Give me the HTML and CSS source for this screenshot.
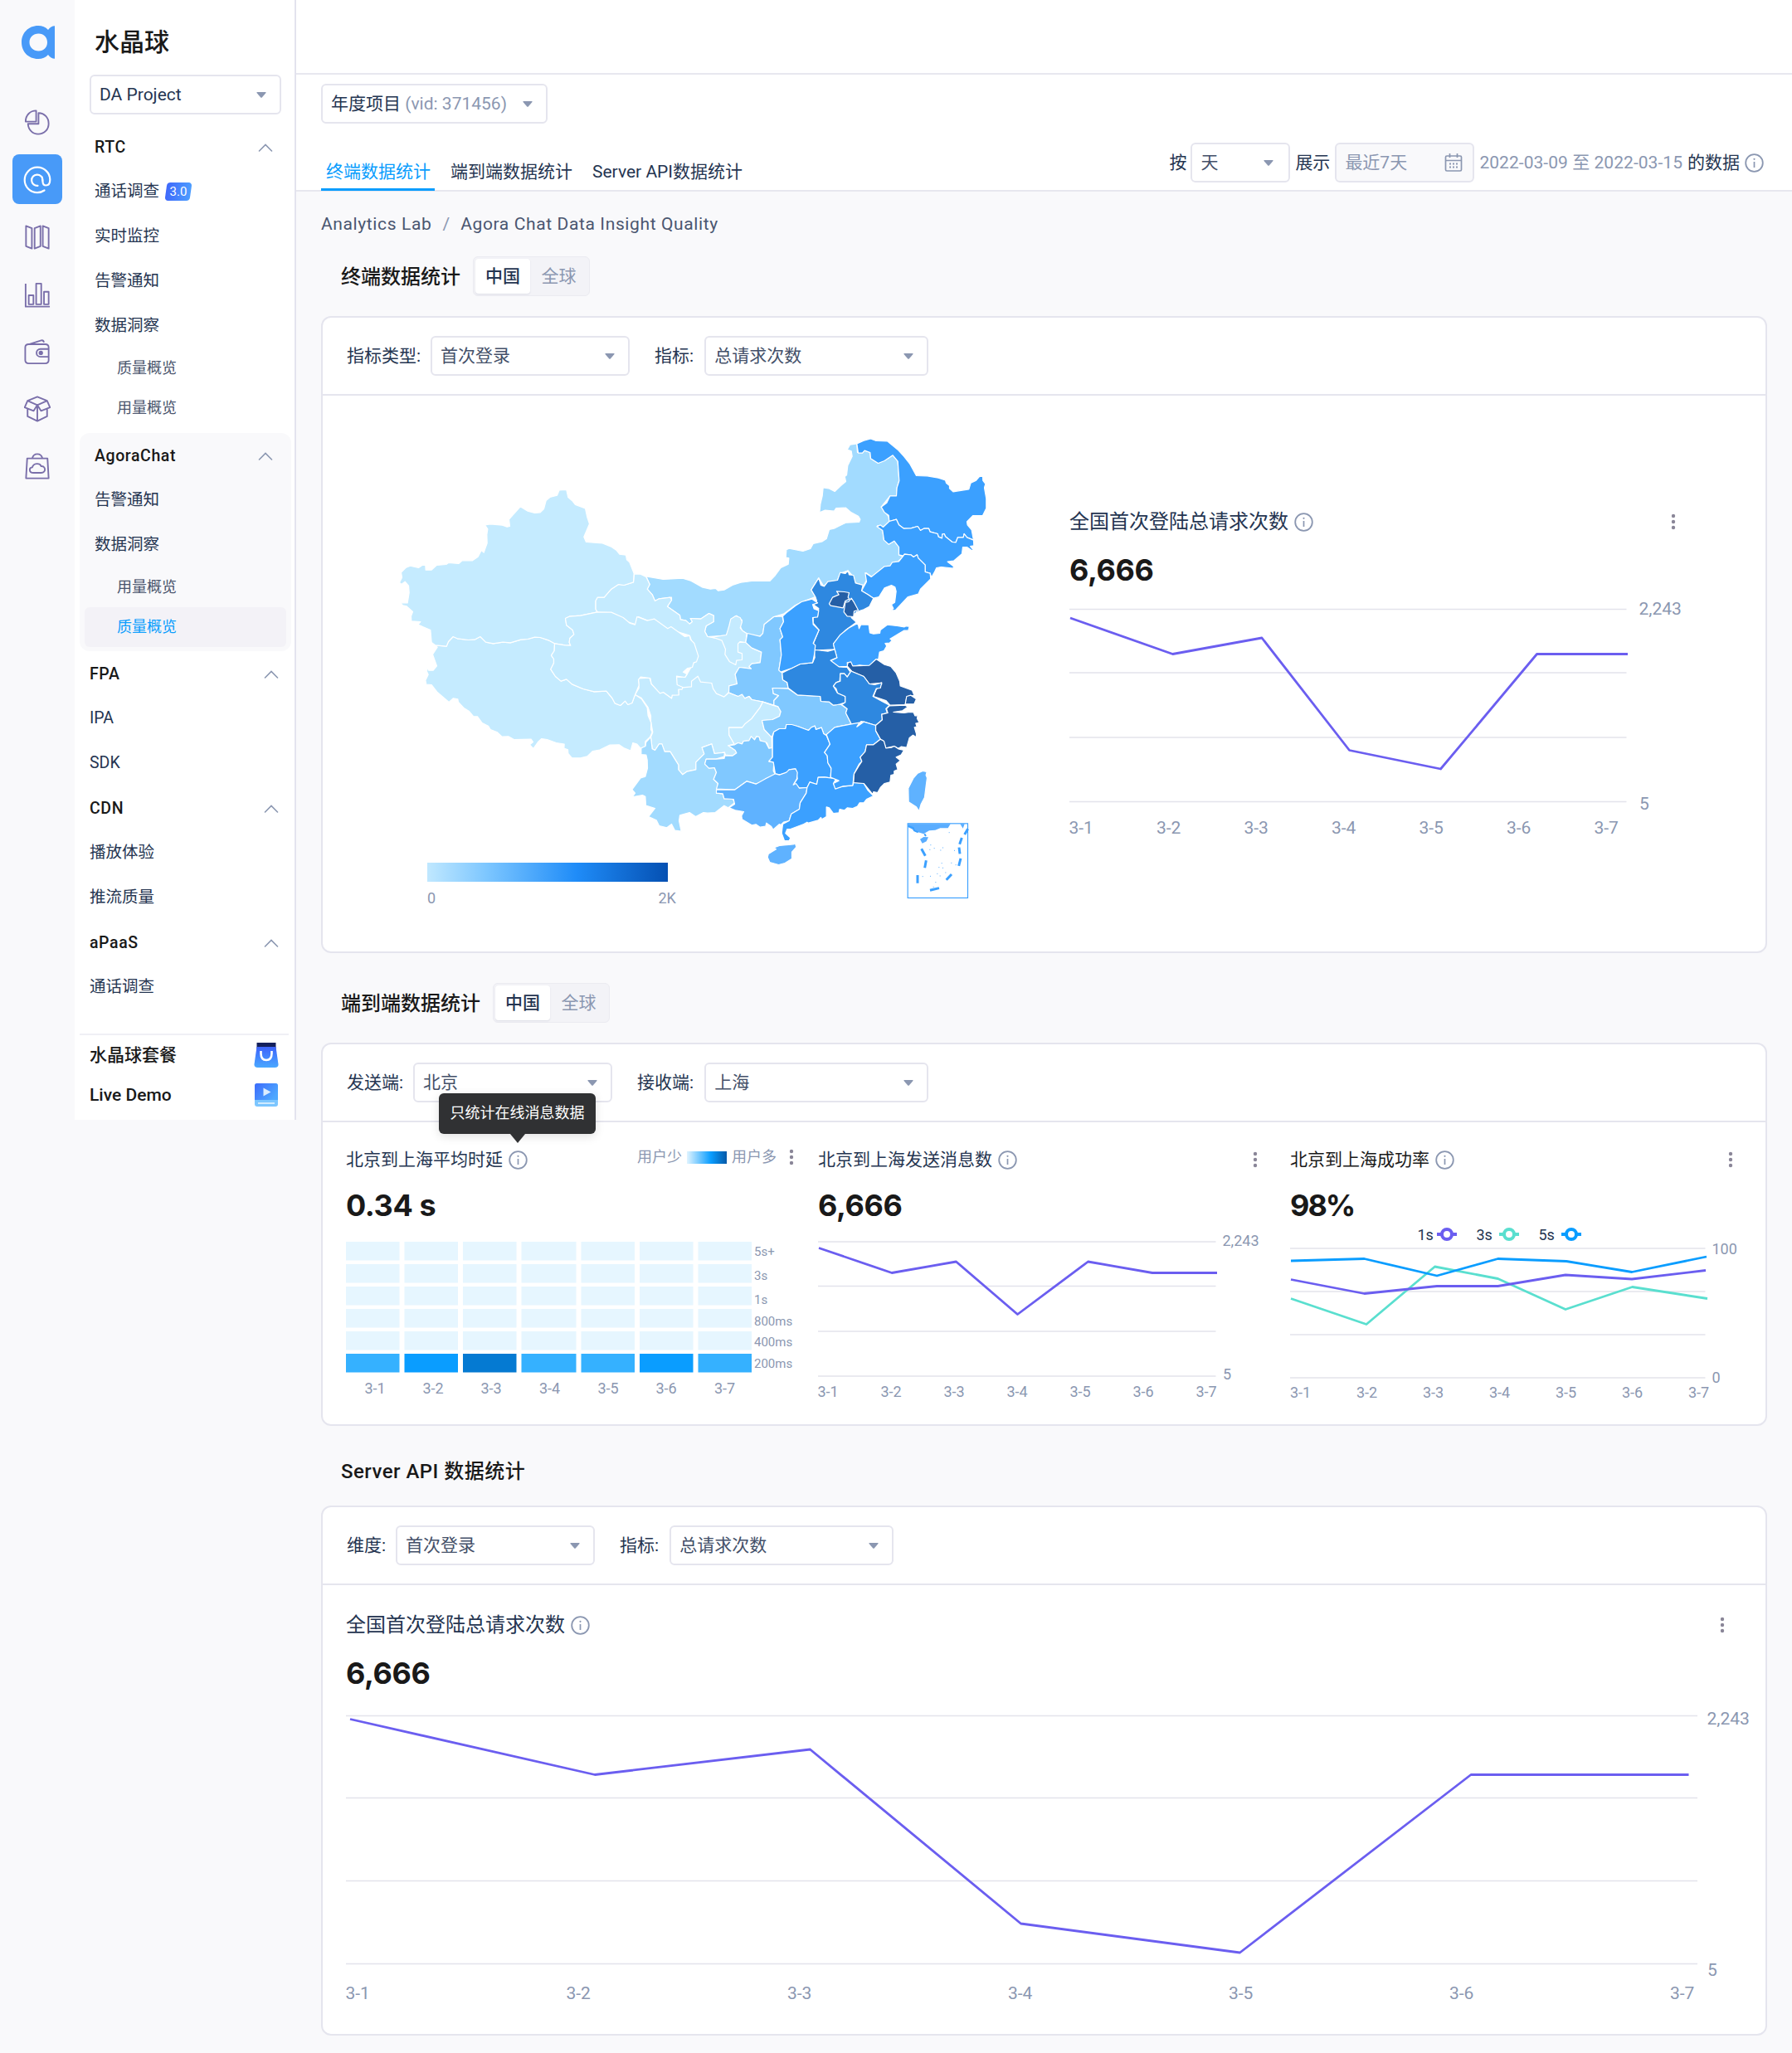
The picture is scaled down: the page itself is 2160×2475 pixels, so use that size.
FILE: index.html
```html
<!DOCTYPE html>
<html lang="zh-CN">
<head>
<meta charset="utf-8">
<title>水晶球</title>
<link rel="stylesheet" href="styles.css">
</head>
<body>
<svg class="defs" aria-hidden="true">
  <symbol id="caret" viewBox="0 0 12 7"><path d="M1 0h10q1 0 .5 1L7 6.200q-1 1-2 0L.5 1Q0 0 1 0Z"/></symbol>
  <symbol id="chevron" viewBox="0 0 18 10"><path d="M1.500 9 9 1.500 16.500 9" fill="none" stroke="currentColor" stroke-width="1.600" stroke-linecap="round"/></symbol>
  <symbol id="info" viewBox="0 0 23 23"><circle cx="11.500" cy="11.500" r="10.300" fill="none" stroke="currentColor" stroke-width="1.800"/><path d="M11.500 10v7" stroke="currentColor" stroke-width="1.700"/><circle cx="11.500" cy="6.800" r="1.100"/></symbol>
  <symbol id="dots" viewBox="0 0 6 20"><circle cx="3" cy="3" r="2.200"/><circle cx="3" cy="10" r="2.200"/><circle cx="3" cy="17" r="2.200"/></symbol>
</svg>
<div class="app">
  <nav class="rail">
    <svg class="logo" viewBox="0 0 40 40"><path fill-rule="evenodd" d="M20 0C8 0 0 9 0 20s8 20 20 20c5 0 9-1.500 12-5 2 3 5 4.800 8 4.800V.2c-3 0-6 1.800-8 4.800-3-3.500-7-5-12-5Zm.5 9.500c6.200 0 10.500 4.600 10.500 10.500s-4.300 10.500-10.500 10.500S9.500 26 9.500 20 14 9.500 20.500 9.500Z"/></svg>
    <a class="rail-item"><svg viewBox="0 0 34 34"><path d="M15.500 1.500C8 1.500 2 7 2 15.500h13.500ZM18.500 4.500v13.800H5C5.500 26 11 31.500 18 31.500c8 0 13.500-6 13.500-13.500S26 4.500 18.500 4.500Z"/></svg></a>
    <a class="rail-item on"><svg viewBox="0 0 34 34"><path d="M25.500 29.500A15 15 0 0 1 17 32.200C8.500 32.200 1.700 25.500 1.700 17S8.500 1.700 17 1.700 32.300 8.500 32.300 16.500c0 4.500-2 7-4.800 7-2.500 0-4-1.500-4-4.500v-2a6.700 6.700 0 1 0-6 6.900M23.300 18.500c-.3-4-.3-4.500-.6-5"/></svg></a>
    <a class="rail-item"><svg viewBox="0 0 34 34"><path d="M2.500 2.500 10 5.500v26l-7.500-3ZM13.500 5.500l7.500-3v26l-7.500 3ZM24 2.500l7.500 3v26l-7.500-3Z"/></svg></a>
    <a class="rail-item"><svg viewBox="0 0 34 34"><path d="M2 2v29.500h31M6 17h6v11.500H6ZM15.500 2H22v26.500h-6.500ZM25.500 12.500h6v16h-6Z"/></svg></a>
    <a class="rail-item"><svg viewBox="0 0 34 34"><path d="M6 7.500h21c3 0 4.500 1.500 4.500 4v16.500c0 2.500-1.500 4-4.500 4H6c-3 0-4.500-1.500-4.500-4V11.500c0-2.500 1.500-4 4.500-4ZM7 7.200 22 2.500c2.500-.6 3 .5 3.500 2.500M31.500 13.500H21c-3 0-5 2.500-5 5s2 5 5 5h10.500"/><circle cx="21.500" cy="18.500" r="1.800"/></svg></a>
    <a class="rail-item"><svg viewBox="0 0 34 34"><path d="M17 1.500 4.500 6.500 17 12l12.500-5.500ZM4.500 6.500.8 15l11.500 4.500L17 12l4.700 7.500L33.200 15l-3.700-8.500M4.500 17v9.500L17 32.500l12.500-6V17M17 12v20.500"/></svg></a>
    <a class="rail-item"><svg viewBox="0 0 34 34"><path d="M4 7h26l1.500 25.500H2.500ZM10.500 7c1-4 3.500-5.500 6.500-5.500s5.500 1.500 6.500 5.500M12 25.500c-6 0-6-6.500-1.500-7 1.500-5.500 9.500-6 11.500-1.500 6-.5 6.500 8.500 0 8.500Z"/></svg></a>
  </nav>

  <aside class="side">
    <h1>水晶球</h1>
    <div class="select project">DA Project<svg class="caret"><use href="#caret"/></svg></div>
    <div class="group in">
      <div class="row head">RTC<svg class="chev"><use href="#chevron"/></svg></div>
      <div class="row">通话调查<span class="badge"><i>3.0</i></span></div>
      <div class="row">实时监控</div>
      <div class="row">告警通知</div>
      <div class="row">数据洞察</div>
      <div class="row sub">质量概览</div>
      <div class="row sub">用量概览</div>
    </div>
    <div class="group in shaded">
      <div class="row head">AgoraChat<svg class="chev"><use href="#chevron"/></svg></div>
      <div class="row">告警通知</div>
      <div class="row">数据洞察</div>
      <div class="row sub">用量概览</div>
      <div class="row sub current">质量概览</div>
    </div>
    <div class="group">
      <div class="row head">FPA<svg class="chev"><use href="#chevron"/></svg></div>
      <div class="row">IPA</div>
      <div class="row">SDK</div>
      <div class="row head">CDN<svg class="chev"><use href="#chevron"/></svg></div>
      <div class="row">播放体验</div>
      <div class="row">推流质量</div>
      <div class="row head">aPaaS<svg class="chev"><use href="#chevron"/></svg></div>
      <div class="row">通话调查</div>
    </div>
    <div class="foot">
      <div class="row">水晶球套餐<svg width="30" height="30" viewBox="0 0 30 30"><defs><linearGradient id="gb" x2="0" y2="1"><stop stop-color="#3d63fb"/><stop offset="1" stop-color="#4aa8ff"/></linearGradient></defs><path d="M3.500 0h23v8h-23Z" fill="#14205c"/><path d="M3.500 5h23l3 21q.3 4-4 4h-21q-4.300 0-4-4Z" fill="url(#gb)"/><path d="M8.500 10v3q0 8 6.500 8t6.500-8v-3" fill="none" stroke="#fff" stroke-width="2.600"/></svg></div>
      <div class="row">Live Demo<svg width="30" height="28" viewBox="0 0 30 28"><defs><linearGradient id="gv" x2="1" y2=".6"><stop stop-color="#3d6bfb"/><stop offset="1" stop-color="#4ea8ff"/></linearGradient></defs><rect x="1" width="28" height="28" rx="3" fill="#7cc6ff"/><path d="M4 0h22q3 0 3 3v17H1V3q0-3 3-3Z" fill="url(#gv)"/><path d="m11.500 5.500 9 5-9 5Z" fill="#dcecff"/><path d="M5 24h20" stroke="#d8efff" stroke-width="1.800"/></svg></div>
    </div>
  </aside>

  <main>
    <div class="topbar"></div>
    <header class="subbar">
      <div class="left">
        <div class="select vid">年度项目&nbsp;<span>(vid: 371456)</span><svg class="caret"><use href="#caret"/></svg></div>
        <div class="tabs"><a class="on">终端数据统计</a><a>端到端数据统计</a><a>Server API数据统计</a></div>
      </div>
      <div class="range">
        <span>按</span>
        <div class="select day">天<svg class="caret"><use href="#caret"/></svg></div>
        <span>展示</span>
        <div class="select picker">最近7天<svg width="22" height="22" viewBox="0 0 22 22"><g fill="none" stroke="currentColor" stroke-width="1.700"><rect x="1.500" y="3" width="19" height="18" rx="1.500"/><path d="M1.500 8.500h19M6.500 0v5M15.500 0v5"/></g><path d="M6 11.500h2v2H6Zm4 0h2v2h-2Zm4 0h2v2h-2Zm-8 4h2v2H6Zm4 0h2v2h-2Zm4 0h2v2h-2Z"/></svg></div>
        <span class="dates">2022-03-09 至 2022-03-15</span>
        <span>的数据</span>
        <svg class="info"><use href="#info"/></svg>
      </div>
    </header>

    <div class="content">
      <div class="crumbs">Analytics Lab<i>/</i>Agora Chat Data Insight Quality</div>

      <div class="section-head"><h2>终端数据统计</h2><div class="toggle"><b>中国</b><span>全球</span></div></div>
      <section class="card terminal">
        <div class="filters">
          <label>指标类型:</label><div class="select w240">首次登录<svg class="caret"><use href="#caret"/></svg></div>
          <label>指标:</label><div class="select w270">总请求次数<svg class="caret"><use href="#caret"/></svg></div>
        </div>
        <div class="body">
          <svg class="map" width="850" height="670" viewBox="389 477 850 670">
            <defs><linearGradient id="scale"><stop stop-color="#c0e8ff"/><stop offset=".25" stop-color="#7cc6ff"/><stop offset=".62" stop-color="#1f8cf8"/><stop offset="1" stop-color="#0550b2"/></linearGradient></defs>
            <g transform="translate(859.500 509.500) scale(.33333)" class="prov">
              <path class="c2" d="M-242,556 -180,567 -110,563 -80,572 -40,595 -10,602 10,600 18,608 40,605 70,588 100,578 140,573 205,573 225,552 245,525 272,512 274,490 263,488 265,460 275,455 325,465 352,456 362,438 395,430 410,420 420,387 440,382 480,362 528,360 532,350 525,338 500,325 480,308 445,309 438,320 405,317 385,325 388,295 395,265 398,235 418,238 440,249 462,228 480,213 476,195 483,190 487,155 503,122 500,103 485,98 495,80 520,76 522,108 540,110 548,101 568,108 570,130 597,147 632,130 650,118 668,140 673,210 665,235 663,265 640,265 608,305 635,340 637,360 615,378 595,372 613,390 618,425 635,440 655,428 672,450 672,478 688,485 665,505 640,520 575,558 553,543 555,570 545,588 515,580 505,555 488,535 460,545 450,570 415,578 400,592 382,562 355,605 370,630 330,645 295,662 255,692 220,702 185,730 180,765 165,775 125,765 105,752 98,735 105,715 85,698 65,712 58,745 48,770 -20,774 -30,755 -25,735 2,720 2,698 -15,690 -45,710 -82,708 -75,720 -85,728 -98,716 -118,712 -120,697 -165,665 -150,642 -150,632 -195,637 -210,645 -220,622 -238,602 -229,585Z"/>
              <path class="c4" d="M520,76 545,65 570,58 590,66 630,67 670,100 690,122 712,150 735,192 775,193 815,200 840,208 843,218 855,228 855,238 868,250 925,241 932,218 950,210 963,195 975,194 976,210 985,222 981,235 988,275 988,310 975,336 940,336 918,358 920,370 935,388 942,425 918,415 908,402 905,415 885,415 878,433 865,432 840,412 836,402 829,404 828,418 815,413 812,402 785,395 780,383 762,383 750,390 740,375 715,382 690,383 672,370 663,350 637,357 635,335 620,325 608,305 628,290 640,265 663,265 665,235 673,210 668,140 650,118 632,130 620,138 597,147 570,130 568,108 548,101 540,110 525,110Z"/>
              <path class="c4" d="M637,357 663,350 672,370 690,383 715,382 740,375 750,390 762,383 780,383 785,395 812,402 815,413 828,418 829,404 836,402 840,412 865,432 878,433 885,415 905,415 908,402 918,415 942,425 943,445 930,447 942,462 935,462 918,450 903,450 900,475 870,500 848,503 870,520 868,527 825,522 808,525 800,542 790,560 785,545 767,540 767,515 742,490 738,478 725,486 715,478 692,476 688,482 672,478 672,450 655,428 635,440 618,425 613,390 592,376 605,370 615,378Z"/>
              <path class="c4" d="M688,482 692,476 715,478 725,486 738,478 742,490 767,515 767,540 785,545 787,565 750,602 742,620 705,630 660,678 643,680 652,672 645,658 657,650 662,610 658,595 645,588 620,598 600,630 580,635 560,622 537,608 555,575 550,543 572,558 620,520 640,518 648,505 672,502Z"/>
              <path class="c5" d="M382,562 390,588 402,592 415,575 450,570 460,542 478,546 488,535 492,550 508,552 515,580 542,588 537,608 560,622 580,635 565,665 545,676 520,684 500,705 518,722 480,750 435,800 440,820 385,823 368,830 362,800 383,750 362,725 362,705 378,700 382,672 362,658 375,645 370,630 355,605Z"/>
              <path class="c6" d="M432,632 455,622 447,610 475,612 492,615 488,632 493,638 478,645 470,670 425,662 420,655Z"/>
              <path class="c6" d="M478,650 490,648 500,635 510,650 525,678 510,682 508,702 485,700 473,685Z"/>
              <path class="c4" d="M435,800 460,767 490,743 518,728 525,730 528,745 535,730 563,731 567,760 580,764 603,762 605,750 630,731 665,735 692,739 698,736 710,737 706,752 690,752 640,782 647,788 638,797 622,798 628,808 618,825 602,830 598,855 585,860 565,882 530,877 499,882 495,867 485,868 487,882 450,882 425,862 448,850 440,822Z"/>
            </g>
            <g transform="translate(739.500 639.500) scale(.33333)" class="prov">
              <path class="c1" d="M75,157 98,158 118,168 131,195 122,212 140,232 150,255 165,247 205,242 210,252 195,275 240,307 242,322 262,326 275,338 285,330 278,318 315,320 345,300 362,308 362,330 335,345 330,365 340,384 448,405 480,405 500,425 535,440 530,478 500,482 498,500 455,495 440,520 447,555 418,562 417,585 400,602 245,590 228,565 228,530 260,530 290,478 305,455 275,380 195,355 90,312 80,340 -58,295 -65,285 -65,255 -58,242 -34,242 -8,212 18,195 38,198 72,187Z"/>
              <path class="c1" d="M355,386 408,378 413,362 418,345 424,320 442,309 458,315 465,330 458,352 467,363 482,373 478,405 458,402 450,410 450,440 465,445 465,468 445,470 442,486 420,475 403,448 405,430 392,398 370,390Z"/>
              <path class="c3" d="M484,372 530,383 540,372 545,340 580,312 610,310 615,330 602,355 612,385 602,395 607,450 598,505 610,515 612,540 628,550 632,572 575,570 578,590 597,597 580,615 580,632 540,620 500,612 490,600 475,607 450,600 417,587 418,562 447,555 440,520 455,495 498,500 490,492 500,482 530,478 535,440 500,425 478,405Z"/>
              <path class="c1" d="M90,535 130,533 137,555 168,587 180,585 210,607 212,594 235,594 235,572 250,568 282,565 282,545 305,527 315,548 355,552 360,572 372,590 400,602 417,587 450,600 465,593 475,607 490,600 500,612 540,620 530,640 500,680 465,713 417,713 418,740 438,772 415,778 440,795 445,805 430,815 405,812 402,803 365,807 355,772 320,785 328,808 298,838 298,865 265,872 250,883 235,865 235,848 205,800 185,800 175,772 165,772 150,795 140,790 135,747 142,730 135,690 135,670 125,640 100,605 78,594 92,570Z"/>
              <path class="c1" d="M540,620 575,632 595,637 605,655 600,672 575,684 537,687 545,720 572,748 573,785 562,788 555,768 530,760 527,747 517,745 510,757 498,745 490,760 470,762 465,772 450,768 438,775 418,740 417,713 465,713 475,700 500,680 530,640Z"/>
              <path class="c2" d="M135,747 140,790 150,795 165,772 175,772 185,800 205,800 235,848 235,865 250,883 265,872 298,865 298,838 328,808 320,785 355,772 365,807 402,803 400,818 370,827 335,827 330,845 345,860 365,858 372,875 362,900 378,915 372,950 395,952 400,970 430,968 438,985 415,1003 400,995 368,1020 340,1022 325,1020 297,1035 275,1020 240,1030 237,1050 245,1088 222,1085 210,1062 193,1075 165,1068 155,1048 127,1035 150,1005 117,995 115,962 105,957 68,964 78,950 67,937 98,895 115,890 123,860 122,830 118,812 100,810 100,785 115,780 118,765Z"/>
              <path class="c3" d="M335,827 370,827 400,825 403,814 430,815 445,805 440,795 415,778 438,775 450,768 465,772 470,762 490,760 498,745 510,757 517,745 527,747 530,760 550,765 562,788 575,786 575,820 562,836 580,838 578,870 585,883 550,898 540,908 515,917 482,907 438,938 372,935 378,915 362,900 372,875 365,858 345,860 330,845Z"/>
              <path class="c3" d="M575,570 632,572 665,595 748,600 750,618 780,620 795,632 820,628 845,645 840,660 860,700 800,712 770,740 760,735 752,713 732,720 728,707 705,723 665,708 625,702 622,717 600,717 580,728 572,748 545,720 537,687 575,684 600,672 605,655 595,637 580,632 580,615 597,597 578,590Z"/>
              <path class="c4" d="M575,748 580,728 600,717 622,717 625,702 645,702 665,708 705,723 715,712 728,707 732,720 752,713 760,735 770,742 783,773 763,803 773,815 775,840 787,860 785,895 762,892 740,893 735,918 710,910 700,930 672,932 650,920 665,898 658,862 635,865 635,877 600,883 585,880 578,838 562,834 575,820Z"/>
              <path class="c25" d="M372,937 438,938 482,907 515,917 550,898 585,880 600,884 625,875 635,865 658,862 665,875 663,898 650,920 660,915 672,932 700,930 697,950 675,985 672,1008 643,1025 635,1050 615,1055 605,1065 600,1062 577,1082 570,1070 553,1058 550,1070 530,1073 515,1063 500,1066 465,1045 463,1032 471,1017 440,1012 418,1003 438,990 434,972 400,970 395,952 372,950Z"/>
              <path class="c4" d="M700,930 710,910 735,918 740,893 762,892 785,895 805,898 795,915 802,930 835,925 865,922 868,912 905,915 920,940 940,960 915,972 905,985 890,985 882,998 865,1005 845,1003 835,1012 818,1008 815,1021 795,1023 780,1003 770,1000 770,1035 753,1045 750,1038 740,1048 705,1058 700,1055 688,1062 640,1080 628,1080 622,1095 640,1112 635,1122 618,1122 608,1095 612,1062 635,1050 643,1025 672,1008 675,985 697,950Z"/>
              <path class="c25" d="M580,1147 600,1140 650,1135 657,1132 661,1145 645,1163 645,1187 620,1203 597,1209 565,1200 557,1182 560,1170 588,1153Z"/>
              <path class="c5" d="M610,515 640,500 675,483 720,478 728,460 726,432 745,433 775,437 800,430 808,460 785,470 815,493 845,495 857,512 845,530 835,518 820,518 818,545 805,550 795,563 810,588 838,600 838,622 820,628 810,630 795,632 780,620 750,618 748,600 665,595 632,570 628,550 612,540Z"/>
              <path class="c4" d="M625,298 658,272 680,258 718,248 738,262 720,268 725,283 742,290 738,313 720,315 722,340 743,360 722,408 730,415 726,450 720,478 675,483 640,500 605,512 598,505 607,450 602,395 612,385 602,355 615,330 612,310Z"/>
              <path class="c6" d="M845,490 848,478 858,475 865,490 925,488 950,465 980,485 1003,492 1022,515 1035,545 1037,562 1080,578 1088,598 1072,597 1060,604 1055,630 1000,632 985,615 940,600 950,575 970,555 960,552 925,555 905,528 862,510Z"/>
              <path class="c6" d="M1060,600 1075,596 1095,610 1087,628 1055,628Z"/>
              <path class="c5" d="M845,495 862,510 905,528 925,555 945,558 970,550 965,570 950,572 938,600 975,620 998,632 985,645 990,660 970,665 972,685 948,705 905,692 895,690 880,710 860,700 840,660 845,645 825,630 838,622 838,600 810,588 805,572 795,563 805,550 820,545 820,518 835,518 845,530 857,512Z"/>
              <path class="c6" d="M998,634 1055,632 1064,638 1045,652 1012,657 1050,660 1072,657 1085,658 1090,670 1100,670 1098,680 1106,695 1093,698 1097,710 1088,712 1095,735 1095,748 1083,740 1070,750 1060,785 1040,782 1030,788 1015,780 985,787 975,760 965,755 948,725 948,705 972,685 970,665 992,660 987,645Z"/>
              <path class="c4" d="M770,738 800,712 860,700 890,695 880,710 905,692 948,705 948,725 965,755 940,775 915,775 910,800 892,820 898,835 888,845 870,880 865,922 830,925 802,935 795,915 815,905 785,893 787,860 775,840 773,815 763,803 783,773Z"/>
              <path class="c6" d="M965,755 978,762 985,787 1005,785 1015,780 1030,790 1050,795 1040,812 1022,820 1037,832 1022,845 1028,865 1015,870 1015,882 1003,885 1000,910 980,915 965,930 955,948 940,945 938,955 905,915 868,912 870,880 888,850 898,835 892,820 910,800 915,775 940,775Z"/>
              <path class="c25" d="M1118,870 1133,873 1130,885 1134,895 1130,925 1125,965 1112,990 1105,1015 1095,1000 1067,982 1066,932 1085,895 1100,878Z"/>
            </g>
            <g transform="translate(469.500 509.500) scale(.33333)" class="prov">
              <path class="c1" d="M165,805 206,809 213,792 230,774 245,781 285,786 310,784 328,774 348,794 375,799 410,794 437,796 475,785 500,783 525,776 545,777 575,787 597,799 596,825 585,842 594,855 594,870 583,892 600,918 620,935 640,928 660,946 700,963 740,973 784,971 805,996 815,1015 835,1023 852,1007 862,1020 877,1014 888,984 912,1000 932,1031 935,1060 946,1085 945,1110 950,1120 942,1137 925,1153 925,1170 908,1178 895,1163 880,1158 872,1187 850,1178 830,1165 797,1166 760,1184 735,1188 715,1207 690,1213 660,1213 646,1197 645,1183 631,1178 632,1163 603,1158 570,1146 550,1143 537,1155 520,1179 507,1165 519,1155 512,1145 450,1146 430,1135 407,1136 390,1120 365,1110 357,1097 335,1086 318,1063 304,1063 287,1043 270,1033 249,1011 247,1000 230,997 215,1011 172,974 152,948 133,947 130,932 140,911 135,900 136,885 142,896 158,896 171,880 156,838 173,812Z"/>
              <path class="c1" d="M36,578 45,560 42,542 60,524 75,518 105,525 118,516 130,516 131,533 152,533 170,516 205,513 213,507 250,510 263,499 300,499 320,485 332,462 341,470 353,436 352,405 355,385 345,370 365,367 408,371 425,377 435,375 432,350 473,304 500,320 525,327 545,325 558,312 566,282 580,270 606,263 614,244 640,243 646,270 660,282 672,297 708,310 715,342 723,366 703,413 711,432 770,436 800,448 820,461 832,476 855,479 858,496 868,505 884,545 882,577 848,588 828,585 802,602 776,632 752,632 745,645 745,675 752,685 691,698 650,701 636,708 640,733 662,750 667,766 652,780 650,795 655,806 635,805 597,799 575,787 545,777 525,776 500,783 475,785 437,796 410,794 375,799 348,794 328,774 310,784 285,786 245,781 230,774 213,792 206,809 165,805 152,795 148,750 103,731 112,720 79,718 78,700 84,684 62,664 48,661 40,652 65,652 71,615 69,590 56,575 43,585Z"/>
              <path class="c1" d="M752,685 802,686 845,705 870,726 888,731 895,702 932,716 958,710 1006,745 1018,738 1068,774 1086,771 1088,784 1102,798 1117,845 1110,865 1100,868 1095,885 1078,888 1062,902 1076,910 1068,921 1038,917 1040,948 1060,957 1058,965 1045,965 1046,985 1022,986 1020,997 990,975 978,979 947,945 943,924 908,920 900,930 902,950 888,984 877,1014 862,1020 852,1007 835,1023 815,1015 805,996 784,971 740,973 700,963 660,946 640,928 620,935 600,918 583,892 594,870 594,855 585,842 596,825 597,799 635,805 655,806 650,795 652,780 667,766 662,750 640,733 636,708 650,701 691,698Z"/>
            </g>
            <g transform="translate(920 780) scale(.33333)">
              <path d="M523,640H677L668,655 640,655 622,662 600,664 580,676 555,668 523,650Z M712,640H728L722,656Z M567,695 580,687 597,688 590,703 575,710Z" fill="#5aadff"/>
              <path d="M524,648 542,654 546,664 560,670M583,676 588,684" fill="none" stroke="#3ba0ff" stroke-width="6"/>
              <path d="M740,658 728,678M718,690 710,713M708,725 711,748M714,765 707,792M681,822 662,842M636,872 603,880M558,825 558,854M589,772 584,799M572,730 586,755" fill="none" stroke="#3ba0ff" stroke-width="9"/>
              <path d="M604,716h3M601,733h3M617,728h3M640,735h3M648,726h3M690,736h3M671,671h3M644,782h3M634,797h3M648,799h3M679,781h3M695,788h3M575,830h3M603,829h3M628,820h3M638,828h3M658,816h3M622,851h3M614,868h3" stroke="#5aadff" stroke-width="3"/>
              <rect x="522.500" y="638.500" width="217" height="269" fill="none" stroke="#3ba0ff" stroke-width="3.500"/>
            </g>
            <rect x="515" y="1040" width="290" height="23" fill="url(#scale)"/>
            <text x="515" y="1089" class="t18">0</text><text x="793.500" y="1089" class="t18">2K</text>
          </svg>
          <div class="panel country">
            <div class="panel-head large"><span>全国首次登陆总请求次数</span><svg class="info"><use href="#info"/></svg><svg class="dots"><use href="#dots"/></svg></div>
            <div class="metric">6,666</div>
            <svg class="chart" width="760" height="300" viewBox="1289 714 760 300">
              <path class="grid" d="M1289 734.500H1960.500M1289 811H1960.500M1289 889H1960.500M1289 966.500H1960.500"/>
              <polyline class="line" points="1290,745 1413.500,788.500 1521,769 1626.500,904.500 1736.500,927 1852.500,788.500 1962,788.500"/>
              <g class="t21"><text x="1975.500" y="741">2,243</text><text x="1976" y="975.500">5</text>
              <text x="1288.500" y="1005">3-1</text><text x="1394" y="1005">3-2</text><text x="1499.500" y="1005">3-3</text><text x="1605" y="1005">3-4</text><text x="1710.500" y="1005">3-5</text><text x="1816" y="1005">3-6</text><text x="1921.500" y="1005">3-7</text></g>
            </svg>
          </div>
        </div>
      </section>

      <div class="section-head"><h2>端到端数据统计</h2><div class="toggle"><b>中国</b><span>全球</span></div></div>
      <section class="card peer">
        <div class="filters">
          <label>发送端:</label><div class="select w240">北京<svg class="caret"><use href="#caret"/></svg></div>
          <label>接收端:</label><div class="select w270">上海<svg class="caret"><use href="#caret"/></svg></div>
        </div>
        <div class="panels">
          <div class="panel">
            <div class="panel-head delay"><span>北京到上海平均时延</span><span class="tip-anchor"><svg class="info"><use href="#info"/></svg><span class="tip">只统计在线消息数据</span></span><span class="density">用户少<i></i>用户多<svg class="dots"><use href="#dots"/></svg></span></div>
            <div class="metric">0.34 s</div>
            <svg class="chart" width="560" height="220" viewBox="417 1481 560 220">
              <g fill="#e6f6ff">
                <path d="M417 1497h64.500v22.500H417ZM487.500 1497h64.500v22.500h-64.500ZM558 1497h64.500v22.500H558ZM628.500 1497h66v22.500h-66ZM700.500 1497h64.500v22.500h-64.500ZM771 1497h64.500v22.500H771ZM841.500 1497h64.500v22.500h-64.500Z" id="cells"/>
                <use href="#cells" y="27"/><use href="#cells" y="54"/><use href="#cells" y="81"/><use href="#cells" y="108"/>
              </g>
              <path d="M417 1632h64.500v22.500H417ZM628.500 1632h66v22.500h-66ZM700.500 1632h64.500v22.500h-64.500ZM841.500 1632h64.500v22.500h-64.500Z" fill="#35b1ff"/>
              <path d="M487.500 1632h64.500v22.500h-64.500ZM771 1632h64.500v22.500H771Z" fill="#0a9dff"/>
              <path d="M558 1632h64.500v22.500H558Z" fill="#057ad2"/>
              <g class="t15"><text x="909" y="1514">5s+</text><text x="909" y="1542.500">3s</text><text x="909" y="1571.500">1s</text><text x="909" y="1597.500">800ms</text><text x="909" y="1623">400ms</text><text x="909" y="1649">200ms</text></g>
              <g class="t18"><text x="439.500" y="1680">3-1</text><text x="509.500" y="1680">3-2</text><text x="579.500" y="1680">3-3</text><text x="650" y="1680">3-4</text><text x="720.500" y="1680">3-5</text><text x="790.500" y="1680">3-6</text><text x="861" y="1680">3-7</text></g>
            </svg>
          </div>
          <div class="panel">
            <div class="panel-head sent"><span>北京到上海发送消息数</span><svg class="info"><use href="#info"/></svg><svg class="dots"><use href="#dots"/></svg></div>
            <div class="metric">6,666</div>
            <svg class="chart" width="560" height="220" viewBox="986 1481 560 220">
              <path class="grid" d="M986 1497H1465.500M986 1550.500H1465.500M986 1605H1465.500M986 1659H1465.500"/>
              <polyline class="line" points="987,1504.500 1075,1534.500 1152.500,1521 1226.500,1584.500 1311.500,1521 1389,1534.500 1467,1534.500"/>
              <g class="t18"><text x="1473.500" y="1501.500">2,243</text><text x="1474" y="1663">5</text>
              <text x="985.500" y="1683.500">3-1</text><text x="1061.500" y="1683.500">3-2</text><text x="1137.500" y="1683.500">3-3</text><text x="1213.500" y="1683.500">3-4</text><text x="1289.500" y="1683.500">3-5</text><text x="1365.500" y="1683.500">3-6</text><text x="1441.500" y="1683.500">3-7</text></g>
            </svg>
          </div>
          <div class="panel">
            <div class="panel-head rate"><span>北京到上海成功率</span><svg class="info"><use href="#info"/></svg><svg class="dots"><use href="#dots"/></svg></div>
            <div class="metric percent">98%</div>
            <svg class="chart" width="560" height="220" viewBox="1555 1481 560 220">
              <path class="grid" d="M1555 1505H2055.500M1555 1557H2055.500M1555 1609H2055.500M1555 1661H2055.500"/>
              <polyline class="line teal" points="1556,1565.500 1647,1596.500 1729.500,1527 1805.500,1541.500 1887,1578.500 1967.500,1551.500 2058,1565.500"/>
              <polyline class="line blue" points="1556,1520 1644.500,1517.500 1732,1538 1805.500,1517.500 1888,1520.500 1967,1533.500 2057,1515"/>
              <polyline class="line" points="1556,1542.500 1644.500,1559.500 1732,1550.500 1805.500,1550.500 1887,1537 1967,1542 2056,1531.500"/>
              <g fill="#fff" stroke-width="4">
                <g stroke="#6b5ef0"><path d="M1732 1488h24"/><circle cx="1744" cy="1488" r="6"/></g>
                <g stroke="#5adfcf"><path d="M1807 1488h24"/><circle cx="1819" cy="1488" r="6"/></g>
                <g stroke="#0a9dff"><path d="M1882 1488h24"/><circle cx="1894" cy="1488" r="6"/></g>
              </g>
              <g class="t18 dark"><text x="1708.500" y="1494.500">1s</text><text x="1779.500" y="1494.500">3s</text><text x="1854.500" y="1494.500">5s</text></g>
              <g class="t18"><text x="2063.500" y="1511.500">100</text><text x="2063.500" y="1666.500">0</text>
              <text x="1555" y="1684.500">3-1</text><text x="1635" y="1684.500">3-2</text><text x="1715" y="1684.500">3-3</text><text x="1795" y="1684.500">3-4</text><text x="1875" y="1684.500">3-5</text><text x="1955" y="1684.500">3-6</text><text x="2035" y="1684.500">3-7</text></g>
            </svg>
          </div>
        </div>
      </section>

      <div class="section-head api"><h2>Server API 数据统计</h2></div>
      <section class="card server">
        <div class="filters">
          <label>维度:</label><div class="select w240">首次登录<svg class="caret"><use href="#caret"/></svg></div>
          <label>指标:</label><div class="select w270">总请求次数<svg class="caret"><use href="#caret"/></svg></div>
        </div>
        <div class="panel wide">
          <div class="panel-head large"><span>全国首次登陆总请求次数</span><svg class="info"><use href="#info"/></svg><svg class="dots"><use href="#dots"/></svg></div>
          <div class="metric">6,666</div>
          <svg class="chart" width="1705" height="380" viewBox="417 2044 1705 380">
            <path class="grid" d="M417 2068.500H2046M417 2167.500H2046M417 2267.500H2046M417 2367.500H2046"/>
            <polyline class="line" points="422,2072.500 717,2139.500 976.500,2109 1230.500,2319 1494.500,2354 1773,2139.500 2035.500,2139.500"/>
            <g class="t21"><text x="2057.500" y="2079">2,243</text><text x="2058" y="2381.500">5</text>
            <text x="416.500" y="2409.500">3-1</text><text x="682.500" y="2409.500">3-2</text><text x="949" y="2409.500">3-3</text><text x="1215" y="2409.500">3-4</text><text x="1481" y="2409.500">3-5</text><text x="1747" y="2409.500">3-6</text><text x="2013" y="2409.500">3-7</text></g>
          </svg>
        </div>
      </section>
    </div>
  </main>
</div>
</body>
</html>
```

FILE: styles.css
```css
* { box-sizing: border-box; }
body { margin: 0; background: #f9f9fb; color: #253551; font: 21px/1 Roboto, "Noto Sans CJK SC", sans-serif; }
h1, h2 { margin: 0; font-weight: 500; color: #191919; }
svg { display: block; flex: none; fill: currentColor; }
i { font-style: normal; }
.defs { position: absolute; width: 0; height: 0; }

.app { display: grid; grid-template-columns: 90px 267px 1fr; align-items: start; height: 2475px; overflow: hidden; white-space: nowrap; }

.rail { display: flex; flex-direction: column; align-items: center; padding-top: 31px; color: #7a6faa; }
.logo { width: 40px; height: 40px; margin: 0 -2px 46px 0; color: #489af8; }
.rail-item { display: flex; align-items: center; justify-content: center; width: 60px; height: 60px; margin-bottom: 9.200px; border-radius: 8px; }
.rail-item svg { width: 32px; height: 32px; fill: none; stroke: currentColor; stroke-width: 2; stroke-linejoin: round; }
.rail-item:nth-of-type(-n+4) svg { margin-top: 2px; }
.rail-item circle { fill: currentColor; }
.rail-item.on { background: #489af8; color: #fff; }
.rail-item.on svg { width: 34px; height: 34px; stroke-width: 2.200; stroke-linecap: round; }

.side { height: 1350px; background: #fff; border-right: 2px solid #e3e3ee; padding: 0 4px 0 6px; }
.side h1 { font-size: 30px; line-height: 60px; padding: 21px 0 0 18px; height: 90px; }
.select { display: flex; align-items: center; height: 48px; padding: 0 16px 0 10px; background: #fff; border: 2px solid #e5e5ee; border-radius: 6px; color: #445069; }
.caret { width: 12px; height: 7px; margin-left: auto; color: #8b97b1; }
.select.project { width: 231px; margin: 0 0 12px 12px; color: #253551; }
.group { padding-left: 12px; }
.group.in { padding-left: 18px; }
.row { display: flex; align-items: center; height: 54px; font-size: 19.500px; }
.row.head { padding-top: 2px; color: #191919; font-weight: 500; letter-spacing: .6px; }
.chev { width: 18px; height: 10px; margin-left: auto; margin-right: 15px; color: #8b97b1; }
.in .chev { margin-right: 22px; }
.row.sub { height: 48px; padding-left: 27px; font-size: 18px; color: #49546c; }
.badge { margin-left: 8px; width: 30px; height: 22px; border-radius: 4px; background: linear-gradient(90deg, #4069fb, #4c9dff); transform: skewX(-8deg); color: #fff; font-size: 15px; line-height: 22px; text-align: center; }
.badge i { display: block; transform: skewX(8deg); }
.group.shaded { width: 255px; height: 263px; margin-top: 6px; background: #f9f9fb; border-radius: 12px; }
.shaded .row.current { width: 243px; margin-left: -12px; padding-left: 39px; border-radius: 6px; background: #f3f2f7; color: #099dfd; }
.foot { width: 252px; margin-top: 29px; padding-left: 12px; border-top: 2px solid #f0f0f5; }
.foot .row { height: 48px; font-size: 21px; font-weight: 500; color: #191919; }
.foot svg { margin: 0 12px 0 auto; }

.topbar { height: 90px; background: #fff; border-bottom: 2px solid #e7e7ef; }
.subbar { display: flex; justify-content: space-between; height: 141px; padding-left: 30px; background: #fff; border-bottom: 2px solid #e7e7ef; }
.vid { width: 273px; margin-top: 11px; color: #253551; }
.vid span { color: #8b97b1; }
.tabs { display: flex; height: 46px; margin-top: 35px; }
.tabs a { display: flex; align-items: center; padding: 0 6px; margin: 0 12px 0 0; }
.tabs .on { color: #099dfd; border-bottom: 3px solid #099dfd; margin-right: 13px; padding: 3px 5px 0 6px; }
.range { display: flex; align-items: center; align-self: flex-end; height: 48px; margin: 0 34px 9px 0; gap: 6px; }
.range > span:first-child { margin-right: -1px; }
.day { width: 120px; padding-right: 18px; }
.picker { width: 168px; padding-right: 12px; background: #f9f9fb; color: #8b97b1; }
.picker svg { margin-left: auto; }
.dates { color: #8b97b1; letter-spacing: .05px; }
.info { width: 23px; height: 23px; color: #8b97b1; }

.content { padding-left: 30px; }
.crumbs { height: 78px; line-height: 79px; color: #4a5670; letter-spacing: .62px; }
.crumbs i { margin: 0 12.500px 0 13px; color: #8b97b1; }
.section-head { display: flex; align-items: center; height: 48px; padding-left: 24px; margin-bottom: 24px; }
.section-head h2 { font-size: 24px; padding-top: 1px; }
.toggle { display: flex; align-items: center; width: 141px; height: 48px; margin-left: 15px; padding: 0 2px; border: 1px solid #ebebf1; border-radius: 6px; background: #f3f3f7; }
.toggle b { width: 66px; height: 42px; line-height: 42px; border-radius: 4px; background: #fff; font-weight: 500; text-align: center; box-shadow: 0 1px 2px rgba(40, 50, 90, .1); }
.toggle span { flex: 1; text-align: center; color: #8b97b1; }

.card { width: 1743px; margin-bottom: 36px; background: #fff; border: 2px solid #e5e5ee; border-radius: 12px; }
.terminal { height: 768px; }
.peer { height: 462px; margin-bottom: 30px; }
.section-head.api { margin-bottom: 18px; }
.api h2 { letter-spacing: .47px; }
.server { height: 639px; margin-bottom: 0; }
.filters { display: flex; align-items: center; height: 94px; padding-left: 29px; border-bottom: 2px solid #e5e5ee; }
.filters label { margin-right: 12px; }
.filters .select { margin-right: 30px; }
.filters .w270 { margin-left: 1px; }
.w240 { width: 240px; }
.w270 { width: 270px; }

.body { display: flex; }
.prov path { stroke: #fff; stroke-width: 3.600; stroke-linejoin: round; }
.c1 { fill: #c5ebff; }
.c2 { fill: #a2dbff; }
.c25 { fill: #5fb2ff; }
.c3 { fill: #80c8ff; }
.c4 { fill: #3ba0ff; }
.c5 { fill: #2e88e0; }
.c6 { fill: #255fa6; }

.panels { display: grid; grid-template-columns: 569px 569px 560px; padding: 27px 0 0 28px; }
.country { padding: 134px 0 0 50px; }
.wide { padding: 30px 0 0 28px; }
.panel-head { display: flex; align-items: center; height: 36px; }
.panel-head.large { font-size: 24px; }
.panel-head .info { margin-left: 6.500px; }
.country .panel-head { width: 731px; }
.wide .panel-head { width: 1662px; }
.panel-head.delay { width: 540px; }
.panel-head.sent { width: 530px; }
.panel-head.rate { width: 534px; color: #191919; }
.dots { width: 6px; height: 20px; margin-left: auto; color: #8a8698; }
.metric { height: 54px; margin-top: 13px; font: 700 36px/54px Inter, sans-serif; letter-spacing: -.4px; color: #191919; }
.panels .metric { height: 55px; margin-top: 10px; }
.metric.percent { letter-spacing: -2px; }
.chart { overflow: visible; }
.grid { fill: none; stroke: #e3e3ec; stroke-width: 1.500; }
.line { fill: none; stroke: #6b5ef0; stroke-width: 2.800; stroke-linejoin: round; }
.line.teal { stroke: #5adfcf; }
.line.blue { stroke: #0a9dff; }
.t21 { font-size: 21px; fill: #8b97b1; }
.t18 { font-size: 18px; fill: #8b97b1; }
.t18.dark { fill: #253551; }
.t15 { font-size: 15px; fill: #8b97b1; }

.density { display: flex; align-items: center; margin-left: auto; padding-bottom: 6px; font-size: 18px; color: #8b97b1; }
.density i { width: 48px; height: 15px; margin: 0 6px; background: linear-gradient(90deg, #e0f4ff, #0a9dff 60%, #0559a8); }
.density .dots { margin-left: 15px; }
.tip-anchor { position: relative; }
.tip { position: absolute; left: -77px; bottom: 43px; width: 189px; height: 49px; border-radius: 6px; background: #303133; color: #fff; font-size: 18px; line-height: 48px; text-align: center; box-shadow: 0 3px 12px rgba(0, 0, 0, .12); }
.tip::after { content: ""; position: absolute; left: 86px; top: 49px; border: 9px solid transparent; border-top: 11px solid #303133; border-bottom: 0; }
```
